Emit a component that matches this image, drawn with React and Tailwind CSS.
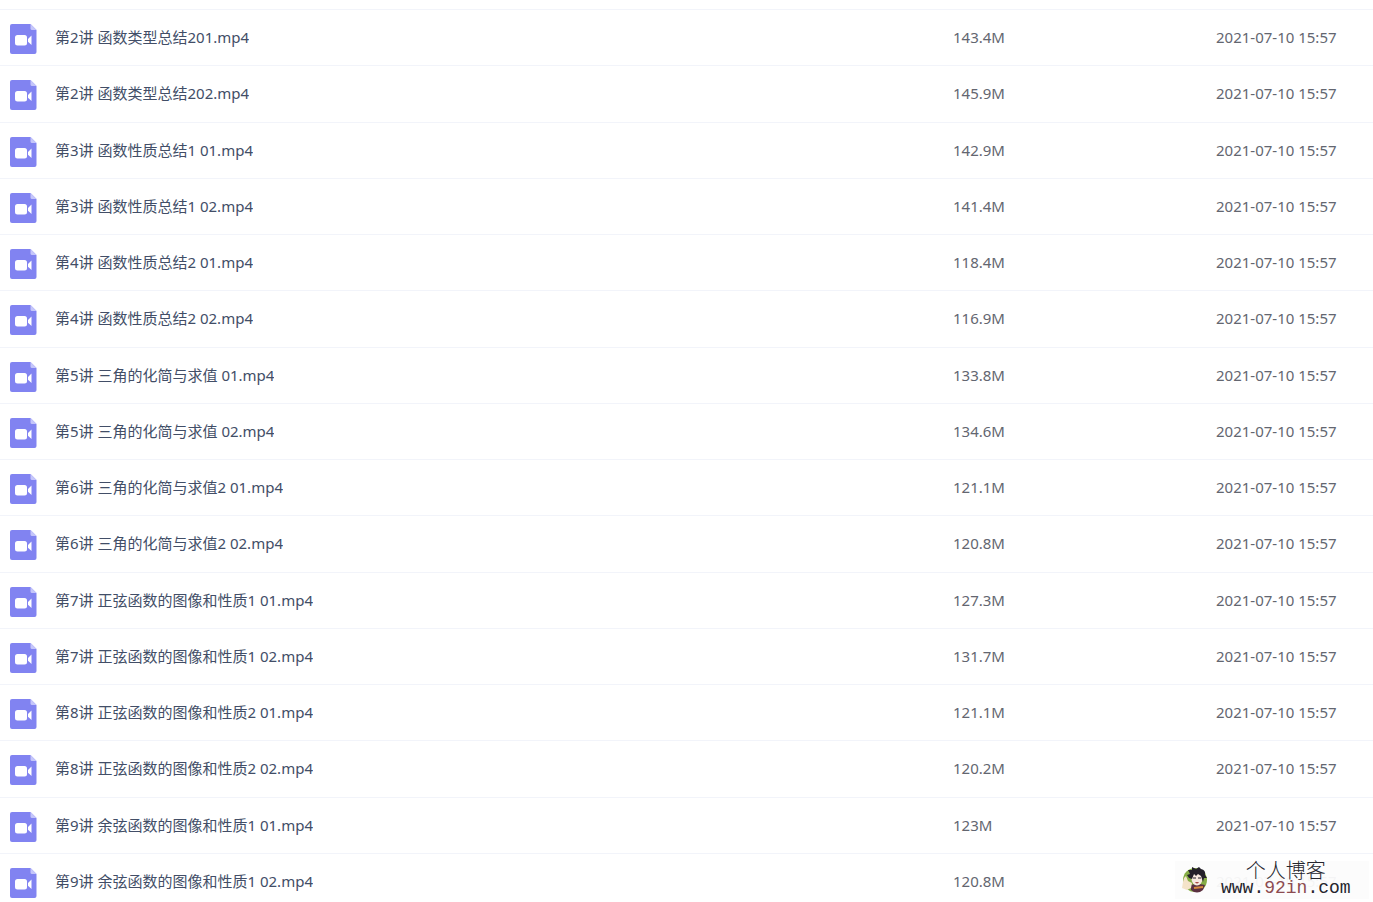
import React from "react";

const files = [
  { name: "第2讲 函数类型总结201.mp4", size: "143.4M" },
  { name: "第2讲 函数类型总结202.mp4", size: "145.9M" },
  { name: "第3讲 函数性质总结1 01.mp4", size: "142.9M" },
  { name: "第3讲 函数性质总结1 02.mp4", size: "141.4M" },
  { name: "第4讲 函数性质总结2 01.mp4", size: "118.4M" },
  { name: "第4讲 函数性质总结2 02.mp4", size: "116.9M" },
  { name: "第5讲 三角的化简与求值 01.mp4", size: "133.8M" },
  { name: "第5讲 三角的化简与求值 02.mp4", size: "134.6M" },
  { name: "第6讲 三角的化简与求值2 01.mp4", size: "121.1M" },
  { name: "第6讲 三角的化简与求值2 02.mp4", size: "120.8M" },
  { name: "第7讲 正弦函数的图像和性质1 01.mp4", size: "127.3M" },
  { name: "第7讲 正弦函数的图像和性质1 02.mp4", size: "131.7M" },
  { name: "第8讲 正弦函数的图像和性质2 01.mp4", size: "121.1M" },
  { name: "第8讲 正弦函数的图像和性质2 02.mp4", size: "120.2M" },
  { name: "第9讲 余弦函数的图像和性质1 01.mp4", size: "123M" },
  { name: "第9讲 余弦函数的图像和性质1 02.mp4", size: "120.8M" },
];

const modified = "2021-07-10 15:57";

function VideoIcon() {
  return (
    <svg viewBox="0 0 27 30" className="mt-1 h-[30px] w-[27px] shrink-0" aria-hidden="true">
      <path d="M2 0H20.5L26.5 6V28a2 2 0 0 1-2 2H2a2 2 0 0 1-2-2V2a2 2 0 0 1 2-2Z" fill="#8183f1" />
      <path d="M20.5 0L26.5 6H22a1.5 1.5 0 0 1-1.5-1.5Z" fill="#c5c6fa" />
      <rect x="5" y="11" width="12" height="10.5" rx="2.5" fill="#fff" />
      <path d="M18 15L21.5 11.5v9.500L18 17.8Z" fill="#fff" />
    </svg>
  );
}

function Avatar() {
  return (
    <svg viewBox="0 0 28 28" className="h-7 w-7 shrink-0" aria-hidden="true">
      <circle cx="14" cy="14" r="12" fill="#86ad45" />
      <path d="M10 19Q16 17 24 19L22 24Q16 29 10 24Z" fill="#5b3040" />
      <ellipse cx="16" cy="13" rx="5.5" ry="6.5" fill="#f7e8df" />
      <path d="M8 12L6 9L9 8L7 4L11 4L11 1L15 3L18 1L20 3Q25 4 24 9L26 12L23 12L22 16L20 10L17 8L15 10L13 8L11 13Z" fill="#24202a" />
      <path d="M12 12h3M17 12h3" stroke="#24202a" strokeWidth="1.2" />
      <path d="M14 16Q16 19 18 16Z" fill="#a94c46" />
      <path d="M3 12L5 10L7 15L11 17L10 22L6 24L1 22L2 16Z" fill="#f4e3c9" />
      <path d="M13 22L22 21" stroke="#d88a3d" strokeWidth="2" />
    </svg>
  );
}

function Watermark() {
  return (
    <div className="absolute right-1 bottom-[3px] flex h-[38px] w-[194px] items-center bg-[#fcfcfc]/95 pl-1.5 text-[#25252d]">
      <Avatar />
      <div className="ml-3 flex flex-col items-center">
        <span className="font-['Noto_Sans_CJK_SC',sans-serif] text-xl leading-4 font-light">个人博客</span>
        <span className="font-['Liberation_Mono',monospace] text-lg leading-5">
          www.<span className="text-[#8c4b50]">92in</span>.com
        </span>
      </div>
    </div>
  );
}

function App() {
  return (
    <main className="relative h-screen overflow-hidden bg-white font-['Noto_Sans','Noto_Sans_CJK_SC',sans-serif] text-[15px] leading-5 text-[#636670]">
      <table className="mt-[9px] w-full table-fixed border-collapse">
        <colgroup>
          <col />
          <col className="w-[263px]" />
          <col className="w-[157px]" />
        </colgroup>
        <tbody>
          {files.map((file) => (
            <tr key={file.name} className="h-14 border-t border-[#f2f4fa] nth-[4n+2]:h-[57px]">
              <td className="p-0 pb-0.5 pl-2.5">
                <div className="flex items-center gap-[18px]">
                  <VideoIcon />
                  <a href="#" className="truncate text-[#424e67]">
                    {file.name}
                  </a>
                </div>
              </td>
              <td className="p-0 pb-0.5">{file.size}</td>
              <td className="p-0 pb-0.5 whitespace-nowrap">{modified}</td>
            </tr>
          ))}
        </tbody>
      </table>
      <Watermark />
    </main>
  );
}

export default App;
